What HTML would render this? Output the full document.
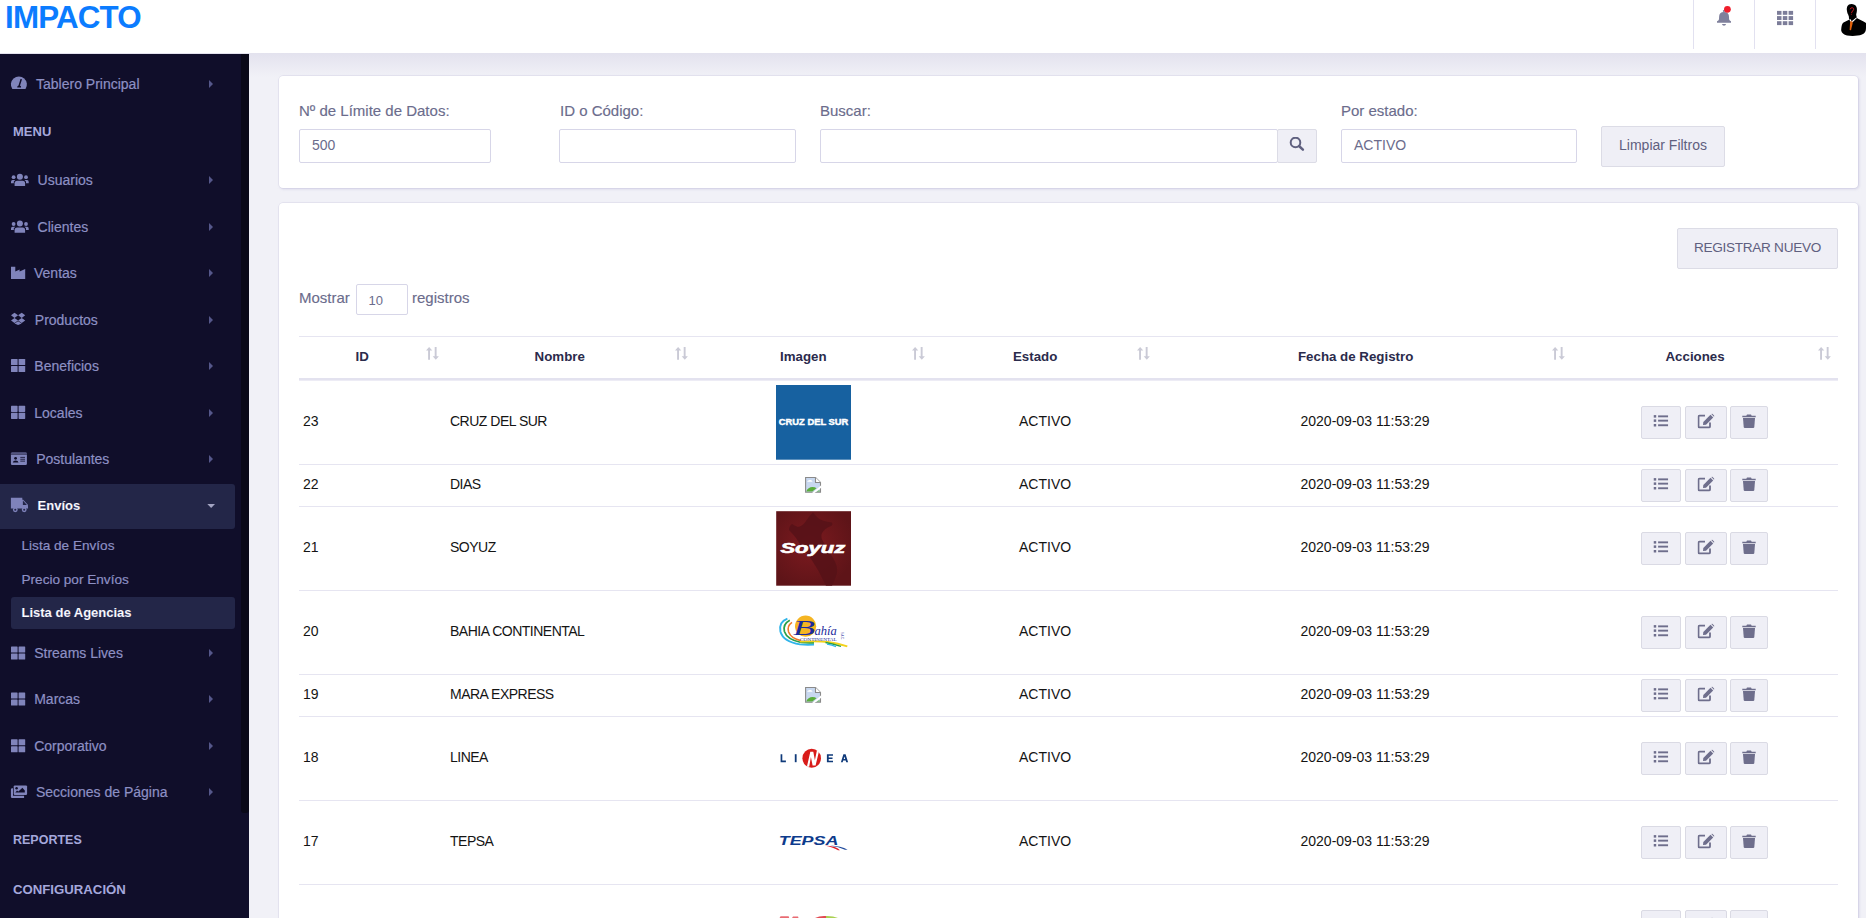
<!DOCTYPE html>
<html><head><meta charset="utf-8">
<style>
*{box-sizing:border-box;margin:0;padding:0}
html,body{width:1866px;height:918px;overflow:hidden;background:#f1f1f7;font-family:"Liberation Sans",sans-serif}
.abs{position:absolute}
#hdr{position:absolute;left:0;top:0;width:1866px;height:53px;background:#fff}
#hshadow{position:absolute;left:0;top:53px;width:1866px;height:24px;background:linear-gradient(#e3e2ee,#f1f1f7)}
.logo{position:absolute;left:5px;top:0px;font-size:31.3px;font-weight:700;color:#0b7cff;letter-spacing:-0.8px}
.vdiv{position:absolute;top:0;width:1px;height:49px;background:#e2e1f0}
#side{position:absolute;left:0;top:54px;width:249px;height:864px;background:#100e2a}
#sbar{position:absolute;left:241px;top:54px;width:8px;height:759px;background:#0a0918;border-radius:0 0 3px 3px}
.si{position:absolute;left:0;width:235px;height:20px;color:#8d90c4;font-size:14px;white-space:nowrap}
.si .t{position:absolute;top:0;line-height:20px}
.si svg{position:absolute}
.si .ar{position:absolute;left:208px;top:6px;width:0;height:0;border-top:4px solid transparent;border-bottom:4px solid transparent;border-left:4px solid #5d5f8e}
.st{position:absolute;color:#8d90c4;font-size:14px;white-space:nowrap;line-height:20px;-webkit-text-stroke:0.2px #8d90c4}
.sh{position:absolute;left:13px;color:#a5a8dc;font-size:13px;font-weight:700;white-space:nowrap;line-height:20px}
.card{position:absolute;background:#fff;border-radius:4px;box-shadow:0 0 0 0.5px rgba(200,198,222,0.5),1px 1px 3px rgba(165,160,205,0.4)}
.lbl{position:absolute;font-size:15px;color:#6b6c8c;white-space:nowrap;line-height:18px;-webkit-text-stroke:0.15px #6b6c8c}
.inp{position:absolute;height:34px;border:1px solid #d7d6e8;border-radius:2px;background:#fff;font-size:14px;color:#6b6c8c;padding-left:12px;line-height:30px}
.btn{position:absolute;background:#efeff6;border:1px solid #dcdce6;border-radius:2px;color:#5f607f;font-size:14px;text-align:center}
.th{position:absolute;top:347.5px;font-size:13.3px;font-weight:700;color:#2b2b4c;white-space:nowrap;line-height:18px}
.sort{position:absolute;top:347px}
.td{position:absolute;font-size:14px;color:#141414;white-space:nowrap;line-height:18px}
.hl{position:absolute;left:299px;width:1539px;height:1px;background:#e6e5f1}
.ab{position:absolute;background:#efeff6;border:1px solid #dadae4;border-radius:2px;height:33px}
.ab svg{position:absolute;left:50%;top:50%;transform:translate(-50%,calc(-50% - 1px))}
</style></head><body>
<div id="hdr">
  <div class="logo">IMPACTO</div>
  <div class="vdiv" style="left:1693px"></div>
  <div class="vdiv" style="left:1754px"></div>
  <div class="vdiv" style="left:1815px"></div>
</div>

<svg class="abs" style="left:1700px;top:0" width="166" height="50" viewBox="0 0 166 50">
<!-- bell -->
<circle cx="23.9" cy="11" r="1.1" fill="#7f809c"/>
<path d="M19.1 16.8 Q19.1 11.9 24 11.9 Q29 11.9 29 16.8 L29.1 19.2 Q29.4 20.6 31 21.3 L31 22.8 L17 22.8 L17 21.3 Q18.7 20.6 19 19.2 Z" fill="#7f809c"/>
<path d="M21.9 24 L26.1 24 Q25.6 25.8 24 25.8 Q22.4 25.8 21.9 24 Z" fill="#7f809c"/>
<circle cx="27.4" cy="9.3" r="3.4" fill="#f01e2c"/>
<!-- grid -->
<g fill="#7c7d99">
<rect x="77" y="10.9" width="4.5" height="3.9"/><rect x="82.8" y="10.9" width="4.5" height="3.9"/><rect x="88.6" y="10.9" width="4.5" height="3.9"/><rect x="77" y="16.1" width="4.5" height="3.9"/><rect x="82.8" y="16.1" width="4.5" height="3.9"/><rect x="88.6" y="16.1" width="4.5" height="3.9"/><rect x="77" y="21.2" width="4.5" height="3.9"/><rect x="82.8" y="21.2" width="4.5" height="3.9"/><rect x="88.6" y="21.2" width="4.5" height="3.9"/>
</g>
<!-- avatar -->
<path d="M151.5 4.1 C147.5 4.1 146.5 7.5 146.9 10.5 C147.2 13 148 14.5 149 16 C149.8 17.5 150.8 18.8 151.8 18.8 C153.5 18.8 155 17 156 15 C157 12 157.3 9 156.5 7 C155.5 4.8 153.5 4.1 151.5 4.1 Z" fill="#000"/>
<path d="M149.5 19.5 L143.5 22.5 C142 23.5 141.5 26 141.2 29.5 C141 32 143 34.5 147 35.5 C152 36.3 158 36 162 34.5 C165 33.5 166 31 166 28 L166 23 C163 21 159 19.5 156.5 17.8 L152 22 Z" fill="#000"/>
<path d="M148.6 15 L149.2 19.6 L151.6 22 L156.8 17.8 L156 14 Z" fill="#000"/>
<path d="M149.3 19.6 L150.3 19.1 L151.7 21.3 L156.3 17.5 L157 18.1 L152.3 22.6 L150.9 22.6 Z" fill="#fff"/>
<path d="M150.3 21.2 L152.3 21.2 L152.6 23.5 L151 30.3 L149.6 30 L150 23.5 Z" fill="#e0600a"/>
<path d="M150.2 9.3 Q150.5 7.6 152.2 7.7 Q154 7.9 153.6 9.7 Q153.2 10.9 152 11.5 L151.6 13 M151.4 13.8 L151.4 14.6" stroke="#c8161e" stroke-width="1" fill="none"/>
</svg>
<div id="hshadow"></div>
<div id="side"></div>
<div id="sbar"></div>
<div class="abs" style="left:0;top:484px;width:235px;height:45px;background:#232648;border-radius:0 3px 3px 0"></div>
<div class="abs" style="left:11px;top:597px;width:224px;height:32px;background:#232648;border-radius:3px"></div>

<svg class="abs" style="left:0;top:0" width="249" height="918" viewBox="0 0 249 918">
<g fill="#8084bb">
<!-- tachometer -->
<path d="M12.3 88.9 A8 8 0 1 1 25.5 88.9 Z"/>
<path d="M22 79.2 L20 85.6 Q21.4 86.2 21 87.4 L17.2 87.4 Q17 85.8 18.5 85.4 L20.5 78.9 Z" fill="#100e2a"/>
<!-- users x2 -->
<g id="usr">
<circle cx="19.9" cy="176.8" r="3"/>
<circle cx="13.6" cy="177.2" r="1.9"/>
<circle cx="26" cy="177.2" r="1.9"/>
<path d="M14.6 186 L14.6 183.2 Q14.6 180.7 17.2 180.7 L22.6 180.7 Q25.1 180.7 25.1 183.2 L25.1 186 Z"/>
<path d="M11 183.3 L11 181.7 Q11 180 12.6 180 L15.3 180 L13.8 181.5 L13.8 183.3 Z"/>
<path d="M28.7 183.3 L28.7 181.7 Q28.7 180 27.1 180 L24.5 180 L26 181.5 L26 183.3 Z"/>
</g>
<use href="#usr" y="46.8"/>
<!-- industry -->
<path d="M11 279 L11 266.7 L15.3 266.7 L15.3 271.6 L19.6 269.4 L19.6 271.6 L25.2 269 L25.2 279 Z"/>
<!-- dropbox -->
<path d="M11 315.3 L14.5 312.7 L18.1 315.3 L14.5 317.9 Z M18.1 315.3 L21.7 312.7 L25.2 315.3 L21.7 317.9 Z M11 320.4 L14.5 317.9 L18.1 320.4 L14.5 323 Z M18.1 320.4 L21.7 317.9 L25.2 320.4 L21.7 323 Z M14.5 323.6 L18.1 321.2 L21.7 323.6 L18.1 325 Z"/>
<!-- th-large -->
<g id="th">
<rect x="11" y="359" width="6.6" height="6.1" rx="0.6"/>
<rect x="18.6" y="359" width="6.6" height="6.1" rx="0.6"/>
<rect x="11" y="366" width="6.6" height="6.1" rx="0.6"/>
<rect x="18.6" y="366" width="6.6" height="6.1" rx="0.6"/>
</g>
<use href="#th" y="46.8"/>
<use href="#th" y="287.5"/>
<use href="#th" y="333.5"/>
<use href="#th" y="380.2"/>
<!-- id card -->
<rect x="10.9" y="452.4" width="16" height="12.6" rx="1.2"/>
<rect x="10.9" y="453.6" width="16" height="0.9" fill="#100e2a"/>
<circle cx="15.6" cy="458.3" r="1.4" fill="#100e2a"/>
<path d="M12.8 462.6 Q13 460.4 15.6 460.4 Q18.2 460.4 18.5 462.6 Z" fill="#100e2a"/>
<rect x="20.3" y="456.9" width="4.7" height="0.8" fill="#100e2a"/>
<rect x="20.3" y="458.8" width="4.7" height="0.8" fill="#100e2a"/>
<rect x="20.3" y="460.7" width="4.7" height="0.8" fill="#100e2a"/>
<!-- images -->
<path d="M10.9 789.5 Q10.9 788.2 12.2 788.2 L13 788.2 L13 795.8 L24.1 795.8 L24.1 798 L12.2 798 Q10.9 798 10.9 796.7 Z"/>
<rect x="13.7" y="785.4" width="13.4" height="9.6" rx="1.2"/>
<circle cx="16.6" cy="788.2" r="1.2" fill="#100e2a"/>
<path d="M15.3 792.6 L17 790.6 L18.4 791.6 L22.4 787.8 L24.8 790.4 L24.8 792.6 Z" fill="#100e2a"/>
</g>
<!-- truck -->
<g fill="#7f83bb">
<path d="M10.9 497.8 L22.3 497.8 L22.3 499.7 L23.2 499.7 L27.9 504.8 L28.1 508.6 L10.9 508.6 Z"/>
<path d="M22.9 500.6 L22.9 505 L26.9 505 Z" fill="#232648"/>
<circle cx="15.3" cy="509.8" r="2.4"/>
<circle cx="24.2" cy="509.8" r="2.4"/>
<circle cx="15.3" cy="509.8" r="1.05" fill="#232648"/><circle cx="24.2" cy="509.8" r="1.05" fill="#232648"/>
</g>
<!-- arrows -->
<g fill="#55578a">
<path d="M209 80 L213 84 L209 88 Z"/>
<path d="M209 176 L213 180 L209 184 Z"/>
<path d="M209 223 L213 227 L209 231 Z"/>
<path d="M209 269 L213 273 L209 277 Z"/>
<path d="M209 316 L213 320 L209 324 Z"/>
<path d="M209 362 L213 366 L209 370 Z"/>
<path d="M209 409 L213 413 L209 417 Z"/>
<path d="M209 455 L213 459 L209 463 Z"/>
<path d="M209 649 L213 653 L209 657 Z"/>
<path d="M209 695 L213 699 L209 703 Z"/>
<path d="M209 742 L213 746 L209 750 Z"/>
<path d="M209 788 L213 792 L209 796 Z"/>
</g>
<path d="M207.3 504 L215 504 L211.15 508 Z" fill="#a3a4c2"/>
</svg>
<div class="st" style="left:36px;top:73.5px">Tablero Principal</div>
<div class="st" style="left:37.6px;top:169.5px">Usuarios</div>
<div class="st" style="left:37.6px;top:216.5px">Clientes</div>
<div class="st" style="left:34px;top:262.5px">Ventas</div>
<div class="st" style="left:34.8px;top:309.5px">Productos</div>
<div class="st" style="left:34.3px;top:355.5px">Beneficios</div>
<div class="st" style="left:34.3px;top:402.5px">Locales</div>
<div class="st" style="left:36.2px;top:448.5px">Postulantes</div>
<div class="st" style="left:34.2px;top:642.5px">Streams Lives</div>
<div class="st" style="left:34.2px;top:688.5px">Marcas</div>
<div class="st" style="left:34.2px;top:735.5px">Corporativo</div>
<div class="st" style="left:36px;top:781.5px">Secciones de Página</div>
<div class="st" style="left:37.6px;top:495.5px;color:#fff;font-weight:700;font-size:13px">Envíos</div>
<div class="st" style="left:21.5px;top:535.5px;font-size:13.6px">Lista de Envíos</div>
<div class="st" style="left:21.5px;top:569.5px;font-size:13.6px">Precio por Envíos</div>
<div class="st" style="left:21.5px;top:602.5px;font-size:13px;color:#fff;font-weight:700">Lista de Agencias</div>
<div class="sh" style="top:122px">MENU</div>
<div class="sh" style="top:830px;font-size:12.5px">REPORTES</div>
<div class="sh" style="top:880px;font-size:13.2px">CONFIGURACIÓN</div>


<!-- filter card -->
<div class="card" style="left:279px;top:76px;width:1579px;height:112px"></div>
<div class="lbl" style="left:299px;top:102px">Nº de Límite de Datos:</div>
<div class="inp" style="left:299px;top:129px;width:192px">500</div>
<div class="lbl" style="left:560px;top:102px">ID o Código:</div>
<div class="inp" style="left:559px;top:129px;width:237px"></div>
<div class="lbl" style="left:820px;top:102px">Buscar:</div>
<div class="inp" style="left:820px;top:129px;width:458px"></div>
<div class="btn" style="left:1277px;top:129px;width:40px;height:34px"></div>
<!-- search icon -->
<svg class="abs" style="left:1289px;top:137px" width="16" height="16" viewBox="0 0 16 16"><circle cx="6.5" cy="5.5" r="4.8" stroke="#5f607f" stroke-width="2" fill="none"/><path d="M10 9 L13.9 12.7" stroke="#5f607f" stroke-width="2.5" stroke-linecap="round"/></svg>

<div class="lbl" style="left:1341px;top:102px">Por estado:</div>
<div class="inp" style="left:1341px;top:129px;width:236px">ACTIVO</div>
<div class="btn" style="left:1601px;top:126px;width:124px;height:41px;line-height:37.5px">Limpiar Filtros</div>

<!-- table card -->
<div class="card" style="left:279px;top:203px;width:1579px;height:740px"></div>
<div class="btn" style="left:1677px;top:228px;width:161px;height:41px;line-height:37.5px;font-size:13.6px;letter-spacing:-0.3px">REGISTRAR NUEVO</div>
<div class="lbl" style="left:299px;top:289px">Mostrar</div>
<div class="inp" style="left:356px;top:284px;width:52px;height:31px;font-size:13px;line-height:31px;padding-left:11.5px">10</div>
<div class="lbl" style="left:412px;top:289px">registros</div>

<div class="hl" style="top:336px"></div>
<div class="hl" style="top:378px;height:3px;background:linear-gradient(#e3e2ef 0,#e3e2ef 66%,#edecf5 66%)"></div>
<div class="th" style="left:355.5px">ID</div>
<div class="th" style="left:534.6px">Nombre</div>
<div class="th" style="left:780px">Imagen</div>
<div class="th" style="left:1013px">Estado</div>
<div class="th" style="left:1298px">Fecha de Registro</div>
<div class="th" style="left:1665.5px">Acciones</div>
<svg class="sort" style="left:425.5px" width="13" height="13" viewBox="0 0 13 13"><g fill="#cacad6"><path d="M0 3.5 L3.1 0 L6.3 3.5 L4 3.5 L4 12.8 L2.1 12.8 L2.1 3.5 Z"/><path d="M6.7 9.3 L8.7 9.3 L8.7 0 L10.6 0 L10.6 9.3 L12.9 9.3 L9.8 12.8 Z"/></g></svg>
<svg class="sort" style="left:674.5px" width="13" height="13" viewBox="0 0 13 13"><g fill="#cacad6"><path d="M0 3.5 L3.1 0 L6.3 3.5 L4 3.5 L4 12.8 L2.1 12.8 L2.1 3.5 Z"/><path d="M6.7 9.3 L8.7 9.3 L8.7 0 L10.6 0 L10.6 9.3 L12.9 9.3 L9.8 12.8 Z"/></g></svg>
<svg class="sort" style="left:911.7px" width="13" height="13" viewBox="0 0 13 13"><g fill="#cacad6"><path d="M0 3.5 L3.1 0 L6.3 3.5 L4 3.5 L4 12.8 L2.1 12.8 L2.1 3.5 Z"/><path d="M6.7 9.3 L8.7 9.3 L8.7 0 L10.6 0 L10.6 9.3 L12.9 9.3 L9.8 12.8 Z"/></g></svg>
<svg class="sort" style="left:1137px" width="13" height="13" viewBox="0 0 13 13"><g fill="#cacad6"><path d="M0 3.5 L3.1 0 L6.3 3.5 L4 3.5 L4 12.8 L2.1 12.8 L2.1 3.5 Z"/><path d="M6.7 9.3 L8.7 9.3 L8.7 0 L10.6 0 L10.6 9.3 L12.9 9.3 L9.8 12.8 Z"/></g></svg>
<svg class="sort" style="left:1552px" width="13" height="13" viewBox="0 0 13 13"><g fill="#cacad6"><path d="M0 3.5 L3.1 0 L6.3 3.5 L4 3.5 L4 12.8 L2.1 12.8 L2.1 3.5 Z"/><path d="M6.7 9.3 L8.7 9.3 L8.7 0 L10.6 0 L10.6 9.3 L12.9 9.3 L9.8 12.8 Z"/></g></svg>
<svg class="sort" style="left:1817.6px" width="13" height="13" viewBox="0 0 13 13"><g fill="#cacad6"><path d="M0 3.5 L3.1 0 L6.3 3.5 L4 3.5 L4 12.8 L2.1 12.8 L2.1 3.5 Z"/><path d="M6.7 9.3 L8.7 9.3 L8.7 0 L10.6 0 L10.6 9.3 L12.9 9.3 L9.8 12.8 Z"/></g></svg>
<div class="hl" style="top:464px"></div>
<div class="td" style="left:303px;top:412.0px">23</div>
<div class="td" style="left:450px;top:412.0px;letter-spacing:-0.5px">CRUZ DEL SUR</div>
<div class="td" style="left:1019px;top:412.0px">ACTIVO</div>
<div class="td" style="left:1300.5px;top:412.0px">2020-09-03 11:53:29</div>
<!--IMG cruz 380-->
<div class="ab" style="left:1641px;top:405.5px;width:40px"><svg width="15" height="12" viewBox="0 0 15 12"><g fill="#6e6e8c"><rect x="0" y="0.1" width="2.7" height="2.5"/><rect x="0" y="4.4" width="2.7" height="2.5"/><rect x="0" y="9" width="2.7" height="2.5"/><rect x="4.6" y="0.4" width="10" height="1.9"/><rect x="4.6" y="4.7" width="10" height="1.9"/><rect x="4.6" y="9.3" width="10" height="1.9"/></g></svg></div>
<div class="ab" style="left:1685px;top:405.5px;width:42px"><svg width="17" height="15" viewBox="0 0 17 15"><g fill="none" stroke="#6e6e8c" stroke-width="1.8"><path d="M7.5 2.2 L2 2.2 Q1 2.2 1 3.2 L1 13 Q1 14 2 14 L11.5 14 Q12.5 14 12.5 13 L12.5 9"/></g><path d="M5.5 11.5 L5.8 8.5 L13 1.3 L15.7 4 L8.5 11.2 Z" fill="#6e6e8c"/><path d="M13.8 0.5 L14.6 0 L17 2.4 L16.5 3.2 Z" fill="#6e6e8c"/></svg></div>
<div class="ab" style="left:1730px;top:405.5px;width:38px"><svg width="14" height="14" viewBox="0 0 14 14"><g fill="#6e6e8c"><path d="M0.3 1.8 L4.3 1.8 L5 0.6 L9 0.6 L9.7 1.8 L13.7 1.8 L13.7 3.2 L0.3 3.2 Z"/><path d="M1 4 L13 4 L12.3 13 Q12.2 14 11.2 14 L2.8 14 Q1.8 14 1.7 13 Z"/></g></svg></div>
<div class="hl" style="top:506px"></div>
<div class="td" style="left:303px;top:475.0px">22</div>
<div class="td" style="left:450px;top:475.0px;letter-spacing:-0.5px">DIAS</div>
<div class="td" style="left:1019px;top:475.0px">ACTIVO</div>
<div class="td" style="left:1300.5px;top:475.0px">2020-09-03 11:53:29</div>
<!--IMG broken 464-->
<div class="ab" style="left:1641px;top:468.5px;width:40px"><svg width="15" height="12" viewBox="0 0 15 12"><g fill="#6e6e8c"><rect x="0" y="0.1" width="2.7" height="2.5"/><rect x="0" y="4.4" width="2.7" height="2.5"/><rect x="0" y="9" width="2.7" height="2.5"/><rect x="4.6" y="0.4" width="10" height="1.9"/><rect x="4.6" y="4.7" width="10" height="1.9"/><rect x="4.6" y="9.3" width="10" height="1.9"/></g></svg></div>
<div class="ab" style="left:1685px;top:468.5px;width:42px"><svg width="17" height="15" viewBox="0 0 17 15"><g fill="none" stroke="#6e6e8c" stroke-width="1.8"><path d="M7.5 2.2 L2 2.2 Q1 2.2 1 3.2 L1 13 Q1 14 2 14 L11.5 14 Q12.5 14 12.5 13 L12.5 9"/></g><path d="M5.5 11.5 L5.8 8.5 L13 1.3 L15.7 4 L8.5 11.2 Z" fill="#6e6e8c"/><path d="M13.8 0.5 L14.6 0 L17 2.4 L16.5 3.2 Z" fill="#6e6e8c"/></svg></div>
<div class="ab" style="left:1730px;top:468.5px;width:38px"><svg width="14" height="14" viewBox="0 0 14 14"><g fill="#6e6e8c"><path d="M0.3 1.8 L4.3 1.8 L5 0.6 L9 0.6 L9.7 1.8 L13.7 1.8 L13.7 3.2 L0.3 3.2 Z"/><path d="M1 4 L13 4 L12.3 13 Q12.2 14 11.2 14 L2.8 14 Q1.8 14 1.7 13 Z"/></g></svg></div>
<div class="hl" style="top:590px"></div>
<div class="td" style="left:303px;top:538.0px">21</div>
<div class="td" style="left:450px;top:538.0px;letter-spacing:-0.5px">SOYUZ</div>
<div class="td" style="left:1019px;top:538.0px">ACTIVO</div>
<div class="td" style="left:1300.5px;top:538.0px">2020-09-03 11:53:29</div>
<!--IMG soyuz 506-->
<div class="ab" style="left:1641px;top:531.5px;width:40px"><svg width="15" height="12" viewBox="0 0 15 12"><g fill="#6e6e8c"><rect x="0" y="0.1" width="2.7" height="2.5"/><rect x="0" y="4.4" width="2.7" height="2.5"/><rect x="0" y="9" width="2.7" height="2.5"/><rect x="4.6" y="0.4" width="10" height="1.9"/><rect x="4.6" y="4.7" width="10" height="1.9"/><rect x="4.6" y="9.3" width="10" height="1.9"/></g></svg></div>
<div class="ab" style="left:1685px;top:531.5px;width:42px"><svg width="17" height="15" viewBox="0 0 17 15"><g fill="none" stroke="#6e6e8c" stroke-width="1.8"><path d="M7.5 2.2 L2 2.2 Q1 2.2 1 3.2 L1 13 Q1 14 2 14 L11.5 14 Q12.5 14 12.5 13 L12.5 9"/></g><path d="M5.5 11.5 L5.8 8.5 L13 1.3 L15.7 4 L8.5 11.2 Z" fill="#6e6e8c"/><path d="M13.8 0.5 L14.6 0 L17 2.4 L16.5 3.2 Z" fill="#6e6e8c"/></svg></div>
<div class="ab" style="left:1730px;top:531.5px;width:38px"><svg width="14" height="14" viewBox="0 0 14 14"><g fill="#6e6e8c"><path d="M0.3 1.8 L4.3 1.8 L5 0.6 L9 0.6 L9.7 1.8 L13.7 1.8 L13.7 3.2 L0.3 3.2 Z"/><path d="M1 4 L13 4 L12.3 13 Q12.2 14 11.2 14 L2.8 14 Q1.8 14 1.7 13 Z"/></g></svg></div>
<div class="hl" style="top:674px"></div>
<div class="td" style="left:303px;top:622.0px">20</div>
<div class="td" style="left:450px;top:622.0px;letter-spacing:-0.5px">BAHIA CONTINENTAL</div>
<div class="td" style="left:1019px;top:622.0px">ACTIVO</div>
<div class="td" style="left:1300.5px;top:622.0px">2020-09-03 11:53:29</div>
<!--IMG bahia 590-->
<div class="ab" style="left:1641px;top:615.5px;width:40px"><svg width="15" height="12" viewBox="0 0 15 12"><g fill="#6e6e8c"><rect x="0" y="0.1" width="2.7" height="2.5"/><rect x="0" y="4.4" width="2.7" height="2.5"/><rect x="0" y="9" width="2.7" height="2.5"/><rect x="4.6" y="0.4" width="10" height="1.9"/><rect x="4.6" y="4.7" width="10" height="1.9"/><rect x="4.6" y="9.3" width="10" height="1.9"/></g></svg></div>
<div class="ab" style="left:1685px;top:615.5px;width:42px"><svg width="17" height="15" viewBox="0 0 17 15"><g fill="none" stroke="#6e6e8c" stroke-width="1.8"><path d="M7.5 2.2 L2 2.2 Q1 2.2 1 3.2 L1 13 Q1 14 2 14 L11.5 14 Q12.5 14 12.5 13 L12.5 9"/></g><path d="M5.5 11.5 L5.8 8.5 L13 1.3 L15.7 4 L8.5 11.2 Z" fill="#6e6e8c"/><path d="M13.8 0.5 L14.6 0 L17 2.4 L16.5 3.2 Z" fill="#6e6e8c"/></svg></div>
<div class="ab" style="left:1730px;top:615.5px;width:38px"><svg width="14" height="14" viewBox="0 0 14 14"><g fill="#6e6e8c"><path d="M0.3 1.8 L4.3 1.8 L5 0.6 L9 0.6 L9.7 1.8 L13.7 1.8 L13.7 3.2 L0.3 3.2 Z"/><path d="M1 4 L13 4 L12.3 13 Q12.2 14 11.2 14 L2.8 14 Q1.8 14 1.7 13 Z"/></g></svg></div>
<div class="hl" style="top:716px"></div>
<div class="td" style="left:303px;top:685.0px">19</div>
<div class="td" style="left:450px;top:685.0px;letter-spacing:-0.5px">MARA EXPRESS</div>
<div class="td" style="left:1019px;top:685.0px">ACTIVO</div>
<div class="td" style="left:1300.5px;top:685.0px">2020-09-03 11:53:29</div>
<!--IMG broken 674-->
<div class="ab" style="left:1641px;top:678.5px;width:40px"><svg width="15" height="12" viewBox="0 0 15 12"><g fill="#6e6e8c"><rect x="0" y="0.1" width="2.7" height="2.5"/><rect x="0" y="4.4" width="2.7" height="2.5"/><rect x="0" y="9" width="2.7" height="2.5"/><rect x="4.6" y="0.4" width="10" height="1.9"/><rect x="4.6" y="4.7" width="10" height="1.9"/><rect x="4.6" y="9.3" width="10" height="1.9"/></g></svg></div>
<div class="ab" style="left:1685px;top:678.5px;width:42px"><svg width="17" height="15" viewBox="0 0 17 15"><g fill="none" stroke="#6e6e8c" stroke-width="1.8"><path d="M7.5 2.2 L2 2.2 Q1 2.2 1 3.2 L1 13 Q1 14 2 14 L11.5 14 Q12.5 14 12.5 13 L12.5 9"/></g><path d="M5.5 11.5 L5.8 8.5 L13 1.3 L15.7 4 L8.5 11.2 Z" fill="#6e6e8c"/><path d="M13.8 0.5 L14.6 0 L17 2.4 L16.5 3.2 Z" fill="#6e6e8c"/></svg></div>
<div class="ab" style="left:1730px;top:678.5px;width:38px"><svg width="14" height="14" viewBox="0 0 14 14"><g fill="#6e6e8c"><path d="M0.3 1.8 L4.3 1.8 L5 0.6 L9 0.6 L9.7 1.8 L13.7 1.8 L13.7 3.2 L0.3 3.2 Z"/><path d="M1 4 L13 4 L12.3 13 Q12.2 14 11.2 14 L2.8 14 Q1.8 14 1.7 13 Z"/></g></svg></div>
<div class="hl" style="top:800px"></div>
<div class="td" style="left:303px;top:748.0px">18</div>
<div class="td" style="left:450px;top:748.0px;letter-spacing:-0.5px">LINEA</div>
<div class="td" style="left:1019px;top:748.0px">ACTIVO</div>
<div class="td" style="left:1300.5px;top:748.0px">2020-09-03 11:53:29</div>
<!--IMG linea 716-->
<div class="ab" style="left:1641px;top:741.5px;width:40px"><svg width="15" height="12" viewBox="0 0 15 12"><g fill="#6e6e8c"><rect x="0" y="0.1" width="2.7" height="2.5"/><rect x="0" y="4.4" width="2.7" height="2.5"/><rect x="0" y="9" width="2.7" height="2.5"/><rect x="4.6" y="0.4" width="10" height="1.9"/><rect x="4.6" y="4.7" width="10" height="1.9"/><rect x="4.6" y="9.3" width="10" height="1.9"/></g></svg></div>
<div class="ab" style="left:1685px;top:741.5px;width:42px"><svg width="17" height="15" viewBox="0 0 17 15"><g fill="none" stroke="#6e6e8c" stroke-width="1.8"><path d="M7.5 2.2 L2 2.2 Q1 2.2 1 3.2 L1 13 Q1 14 2 14 L11.5 14 Q12.5 14 12.5 13 L12.5 9"/></g><path d="M5.5 11.5 L5.8 8.5 L13 1.3 L15.7 4 L8.5 11.2 Z" fill="#6e6e8c"/><path d="M13.8 0.5 L14.6 0 L17 2.4 L16.5 3.2 Z" fill="#6e6e8c"/></svg></div>
<div class="ab" style="left:1730px;top:741.5px;width:38px"><svg width="14" height="14" viewBox="0 0 14 14"><g fill="#6e6e8c"><path d="M0.3 1.8 L4.3 1.8 L5 0.6 L9 0.6 L9.7 1.8 L13.7 1.8 L13.7 3.2 L0.3 3.2 Z"/><path d="M1 4 L13 4 L12.3 13 Q12.2 14 11.2 14 L2.8 14 Q1.8 14 1.7 13 Z"/></g></svg></div>
<div class="hl" style="top:884px"></div>
<div class="td" style="left:303px;top:832.0px">17</div>
<div class="td" style="left:450px;top:832.0px;letter-spacing:-0.5px">TEPSA</div>
<div class="td" style="left:1019px;top:832.0px">ACTIVO</div>
<div class="td" style="left:1300.5px;top:832.0px">2020-09-03 11:53:29</div>
<!--IMG tepsa 800-->
<div class="ab" style="left:1641px;top:825.5px;width:40px"><svg width="15" height="12" viewBox="0 0 15 12"><g fill="#6e6e8c"><rect x="0" y="0.1" width="2.7" height="2.5"/><rect x="0" y="4.4" width="2.7" height="2.5"/><rect x="0" y="9" width="2.7" height="2.5"/><rect x="4.6" y="0.4" width="10" height="1.9"/><rect x="4.6" y="4.7" width="10" height="1.9"/><rect x="4.6" y="9.3" width="10" height="1.9"/></g></svg></div>
<div class="ab" style="left:1685px;top:825.5px;width:42px"><svg width="17" height="15" viewBox="0 0 17 15"><g fill="none" stroke="#6e6e8c" stroke-width="1.8"><path d="M7.5 2.2 L2 2.2 Q1 2.2 1 3.2 L1 13 Q1 14 2 14 L11.5 14 Q12.5 14 12.5 13 L12.5 9"/></g><path d="M5.5 11.5 L5.8 8.5 L13 1.3 L15.7 4 L8.5 11.2 Z" fill="#6e6e8c"/><path d="M13.8 0.5 L14.6 0 L17 2.4 L16.5 3.2 Z" fill="#6e6e8c"/></svg></div>
<div class="ab" style="left:1730px;top:825.5px;width:38px"><svg width="14" height="14" viewBox="0 0 14 14"><g fill="#6e6e8c"><path d="M0.3 1.8 L4.3 1.8 L5 0.6 L9 0.6 L9.7 1.8 L13.7 1.8 L13.7 3.2 L0.3 3.2 Z"/><path d="M1 4 L13 4 L12.3 13 Q12.2 14 11.2 14 L2.8 14 Q1.8 14 1.7 13 Z"/></g></svg></div>
<div class="ab" style="left:1641px;top:909.5px;width:40px"><svg width="15" height="12" viewBox="0 0 15 12"><g fill="#6e6e8c"><rect x="0" y="0.1" width="2.7" height="2.5"/><rect x="0" y="4.4" width="2.7" height="2.5"/><rect x="0" y="9" width="2.7" height="2.5"/><rect x="4.6" y="0.4" width="10" height="1.9"/><rect x="4.6" y="4.7" width="10" height="1.9"/><rect x="4.6" y="9.3" width="10" height="1.9"/></g></svg></div>
<div class="ab" style="left:1685px;top:909.5px;width:42px"><svg width="17" height="15" viewBox="0 0 17 15"><g fill="none" stroke="#6e6e8c" stroke-width="1.8"><path d="M7.5 2.2 L2 2.2 Q1 2.2 1 3.2 L1 13 Q1 14 2 14 L11.5 14 Q12.5 14 12.5 13 L12.5 9"/></g><path d="M5.5 11.5 L5.8 8.5 L13 1.3 L15.7 4 L8.5 11.2 Z" fill="#6e6e8c"/><path d="M13.8 0.5 L14.6 0 L17 2.4 L16.5 3.2 Z" fill="#6e6e8c"/></svg></div>
<div class="ab" style="left:1730px;top:909.5px;width:38px"><svg width="14" height="14" viewBox="0 0 14 14"><g fill="#6e6e8c"><path d="M0.3 1.8 L4.3 1.8 L5 0.6 L9 0.6 L9.7 1.8 L13.7 1.8 L13.7 3.2 L0.3 3.2 Z"/><path d="M1 4 L13 4 L12.3 13 Q12.2 14 11.2 14 L2.8 14 Q1.8 14 1.7 13 Z"/></g></svg></div>

<svg class="abs" style="left:770px;top:380px" width="90" height="538" viewBox="770 380 90 538">
<defs>
<radialGradient id="sg" cx="0.45" cy="0.45" r="0.6"><stop offset="0" stop-color="#7d1a1f"/><stop offset="1" stop-color="#5e1418"/></radialGradient>
</defs>
<!-- cruz del sur -->
<rect x="776" y="385" width="75" height="74.7" fill="#1761a0"/>
<text x="778.8" y="425.2" font-family="Liberation Sans" font-weight="700" font-size="9.4" fill="#fff" stroke="#fff" stroke-width="0.45" textLength="69.5" lengthAdjust="spacingAndGlyphs">CRUZ DEL SUR</text>
<!-- broken image icons -->
<g id="brk">
<path d="M805.6 477.5 L815.5 477.5 L820.5 482.5 L820.5 492.2 L805.6 492.2 Z" fill="#c8d8f0" stroke="#8a8a8a" stroke-width="1.1"/>
<path d="M815.5 477.5 L815.5 482.5 L820.5 482.5" fill="#fff" stroke="#8a8a8a" stroke-width="1.1"/>
<path d="M807 481.8 Q808.5 479.5 810.5 480 Q812 480.3 812.6 481.8 Z" fill="#fff"/>
<path d="M806.2 491.6 Q808 487 812.5 487 Q815 487 816.5 488.2 L812.3 491.6 Z" fill="#5aad3c"/>
<path d="M816.5 491.6 Q818 490 819.8 490.5 L819.8 491.6 Z" fill="#5aad3c"/>
<path d="M811.5 493.5 L821.5 485 L821.5 487.5 L814 493.5 Z" fill="#fff"/>
</g>
<use href="#brk" y="210"/>
<!-- soyuz -->
<rect x="776.2" y="511.2" width="74.8" height="74.5" fill="url(#sg)"/>
<path d="M813 512.5 Q816 516 818 518 Q821.5 521 832 522.5 Q833 525 831 526 Q825 528 822 533 Q820 537 824 543 Q828 550 833 558 Q838 566 837 573 Q835 580 832 585.7 L826 585.7 Q822 578 818 570 Q812 560 806 552 Q800 545 796 538 Q792 533 789 530 Q789 526 792 524 Q795 526 798 527 Q803 526 806 521 Q809 516 813 512.5 Z" fill="#561217" opacity="0.85"/>
<text x="780.4" y="552.8" font-family="Liberation Sans" font-weight="700" font-style="italic" font-size="14.5" fill="#fff" stroke="#fff" stroke-width="0.6" textLength="65" lengthAdjust="spacingAndGlyphs">Soyuz</text>
<!-- bahia -->
<circle cx="805.6" cy="626.2" r="10.6" fill="#f5b522"/>
<path d="M787.4 618.6 Q778.5 622 780.4 631.5 Q783 641.5 800 644.4 Q806 645 814 644.6" fill="none" stroke="#30b4ea" stroke-width="1.9"/>
<path d="M789.8 620.2 Q782.6 624 784.4 631.5 Q787 639.5 801 642.5 Q808 643.2 814 642.8" fill="none" stroke="#2aa04a" stroke-width="1.7"/>
<path d="M792 622.4 Q786.7 626 788.6 632 Q791 638.5 801 640.6" fill="none" stroke="#f07a28" stroke-width="1.6"/>
<path d="M800 641.6 Q820 641 828 642 Q838 643.5 847.3 646.3" fill="none" stroke="#f3d21a" stroke-width="1.8"/>
<path d="M825.5 642.6 Q832 643.8 841 646.4" fill="none" stroke="#2aa04a" stroke-width="1.5"/>
<path d="M827 644.2 Q832 645 836 646.6" fill="none" stroke="#30b4ea" stroke-width="1.3"/>
<text x="793" y="634.8" font-family="Liberation Serif" font-style="italic" font-size="21" fill="#1c2a9c" textLength="22" lengthAdjust="spacingAndGlyphs">B</text>
<text x="814.5" y="634.8" font-family="Liberation Serif" font-style="italic" font-size="12.5" fill="#1c2a9c" textLength="22.3" lengthAdjust="spacingAndGlyphs">ahía</text>
<text x="800" y="640.8" font-family="Liberation Serif" font-size="4.6" fill="#1c2a9c" textLength="36.8" lengthAdjust="spacingAndGlyphs">CONTINENTAL</text>
<text x="0" y="0" font-family="Liberation Sans" font-size="2.6" fill="#1c2a9c" transform="translate(840.6 632) rotate(90)">S.A.C.</text>
<!-- linea -->
<g fill="#0f3a7a">
<path d="M780.6 754.2 L782.3 754.2 L782.3 760.6 L785.9 760.6 L785.9 762.2 L780.6 762.2 Z"/>
<rect x="794.8" y="754.2" width="1.8" height="8"/>
<path d="M826.9 754.2 L833 754.2 L833 755.7 L828.7 755.7 L828.7 757.4 L832.5 757.4 L832.5 758.9 L828.7 758.9 L828.7 760.7 L833 760.7 L833 762.2 L826.9 762.2 Z"/>
<path d="M843.4 754.2 L845.6 754.2 L848.1 762.2 L846.2 762.2 L845.7 760.6 L843.2 760.6 L842.7 762.2 L840.9 762.2 Z M843.7 759.1 L845.2 759.1 L844.5 756.5 Z"/>
</g>
<ellipse cx="811.7" cy="758.3" rx="9.3" ry="9.5" fill="#d91c1a"/>
<path d="M806.9 766.8 L810.3 751.8 L813.3 751.8 L814.9 760.3 L816.9 750.4 L819 751.2 L815.6 765.4 L812.6 765.4 L810.9 757 L809.2 766.8 Z" fill="#fff"/>
<!-- tepsa -->
<text x="778.7" y="844.8" font-family="Liberation Sans" font-weight="700" font-style="italic" font-size="13.5" fill="#0d3b8c" textLength="59.8" lengthAdjust="spacingAndGlyphs">TEPSA</text>
<path d="M824.5 845.5 Q836 845.8 840 850.3 L838 850.3 Q834 847.5 824.5 845.5 Z" fill="#e0202a"/>
<path d="M830 845.5 Q841 846 847.7 849.8 L845 849.8 Q839 847 830 845.5 Z" fill="#1f4a9c"/>
<!-- partial row 8 logo --><g opacity="0.75">
<path d="M779.6 918 L780.5 916.2 L788.6 916.2 L789.2 918 Z" fill="#e23a44"/>
<path d="M792 918 L793 916.5 L798 916.5 L798.5 918 Z" fill="#e23a44"/>
<path d="M815 918 Q820 915.5 826 916 L826 918 Z" fill="#d90f1a"/>
<path d="M826 916 Q833 915.8 838 918 L826 918 Z" fill="#8fc21a"/></g>
</svg>
</body></html>
